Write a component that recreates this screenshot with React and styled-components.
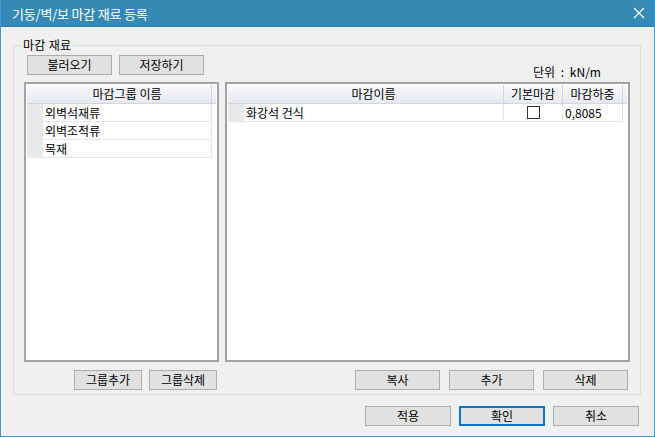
import { createGlobalStyle } from "styled-components";
import styled from "styled-components";

const GlobalStyle = createGlobalStyle`
  html, body {
    margin: 0;
    padding: 0;
    background: #ffffff;
  }
  * {
    box-sizing: border-box;
  }
`;

const font = `"Noto Sans CJK KR", "Noto Sans", sans-serif`;

const leftCols = [
  { key: "rh", width: 16, label: "" },
  { key: "name", width: 169, label: "마감그룹 이름" },
];

const rightCols = [
  { key: "rh", width: 16, label: "" },
  { key: "name", width: 260, label: "마감이름" },
  { key: "base", width: 59, label: "기본마감" },
  { key: "load", width: 60, label: "마감하중" },
];

const groups = ["외벽석재류", "외벽조적류", "목재"];
const materials = [{ name: "화강석 건식", base: false, load: "0,8085" }];

const App = () => {
  return (
    <>
      <GlobalStyle />
      <Window>
        <TitleBar>
          <TitleText>기둥/벽/보 마감 재료 등록</TitleText>
          <CloseIcon width="12" height="12" viewBox="0 0 12 12">
            <path d="M1 1 L11 11 M11 1 L1 11" stroke="#ffffff" strokeWidth="1.2" />
          </CloseIcon>
        </TitleBar>
        <Body>
          <GroupBox>
            <GroupLabel>마감 재료</GroupLabel>
            <TopRow>
              <ButtonRow>
                <Button $w={85}>불러오기</Button>
                <Button $w={85}>저장하기</Button>
              </ButtonRow>
              <UnitLabel>단위 : kN/m</UnitLabel>
            </TopRow>
            <TablesGrid>
              <TableBox>
                <HeaderRow>
                  {leftCols.map((c) => (
                    <HeaderCell key={c.key} $w={c.width} $plain={c.key === "rh"}>
                      {c.label}
                    </HeaderCell>
                  ))}
                </HeaderRow>
                {groups.map((g) => (
                  <DataRow key={g}>
                    <RowHead $w={16} />
                    <Cell $w={169}>{g}</Cell>
                  </DataRow>
                ))}
              </TableBox>
              <TableBox>
                <HeaderRow>
                  {rightCols.map((c) => (
                    <HeaderCell key={c.key} $w={c.width} $plain={c.key === "rh"}>
                      {c.label}
                    </HeaderCell>
                  ))}
                </HeaderRow>
                {materials.map((m) => (
                  <DataRow key={m.name}>
                    <RowHead $w={16} />
                    <Cell $w={260}>{m.name}</Cell>
                    <Cell $w={59} $center>
                      <CheckBox />
                    </Cell>
                    <Cell $w={60}>{m.load}</Cell>
                  </DataRow>
                ))}
              </TableBox>
              <ButtonRow $end $gap={7}>
                <Button $w={68}>그룹추가</Button>
                <Button $w={68}>그룹삭제</Button>
              </ButtonRow>
              <ButtonRow $end $gap={9}>
                <Button $w={85}>복사</Button>
                <Button $w={85}>추가</Button>
                <Button $w={85}>삭제</Button>
              </ButtonRow>
            </TablesGrid>
          </GroupBox>
          <Footer>
            <Button $w={86}>적용</Button>
            <Button $w={86} $default>
              확인
            </Button>
            <Button $w={86}>취소</Button>
          </Footer>
        </Body>
      </Window>
    </>
  );
};

export default App;

const Window = styled.div`
  width: 655px;
  height: 437px;
  display: flex;
  flex-direction: column;
  background: #f0f0f0;
  border: 1px solid #3d9dd2;
  border-top: none;
  font-family: ${font};
  font-size: 12px;
  color: #000;
  overflow: hidden;
`;

const TitleBar = styled.div`
  height: 27px;
  flex: none;
  display: flex;
  align-items: center;
  justify-content: space-between;
  padding: 0 8px 0 11px;
  background: #3589b4;
  border-bottom: 1px solid #2f7ca4;
`;

const TitleText = styled.span`
  color: #ffffff;
  font-size: 13px;
  letter-spacing: -0.2px;
`;

const CloseIcon = styled.svg`
  display: block;
  margin-right: 1px;
`;

const Body = styled.div`
  flex: 1;
  display: flex;
  flex-direction: column;
  padding: 18px 13px 0 12px;
`;

const GroupBox = styled.div`
  position: relative;
  height: 350px;
  border: 1px solid #dcdcdc;
  padding: 9px 10px 0 10px;
`;

const GroupLabel = styled.span`
  position: absolute;
  top: -9px;
  left: 7px;
  padding: 0 2px;
  background: #f0f0f0;
  line-height: 16px;
  letter-spacing: 0.3px;
`;

const TopRow = styled.div`
  display: flex;
  align-items: flex-end;
  justify-content: space-between;
  height: 20px;
  padding: 0 29px 0 3px;
`;

const UnitLabel = styled.span`
  line-height: 16px;
  margin-bottom: -5px;
  word-spacing: 3px;
`;

const ButtonRow = styled.div`
  display: flex;
  gap: ${(p) => p.$gap || 7}px;
  justify-content: ${(p) => (p.$end ? "flex-end" : "flex-start")};
  padding-right: ${(p) => (p.$end ? 2 : 0)}px;
`;

const Button = styled.button`
  width: ${(p) => p.$w}px;
  height: 20px;
  padding: 0;
  margin: 0;
  font-family: ${font};
  font-size: 12px;
  line-height: 16px;
  color: #000;
  background: #e1e1e1;
  border: ${(p) => (p.$default ? "2px solid #0078d7" : "1px solid #adadad")};
`;

const TablesGrid = styled.div`
  display: grid;
  grid-template-columns: 195px 405px;
  grid-template-rows: 280px 20px;
  column-gap: 6px;
  row-gap: 8px;
  margin-top: 7px;
`;

const TableBox = styled.div`
  background: #ffffff;
  border: 2px solid #a3a3a3;
  padding: 1px;
  display: flex;
  flex-direction: column;
  overflow: hidden;
`;

const HeaderRow = styled.div`
  display: flex;
  height: 19px;
  flex: none;
  background: linear-gradient(#f8f9fc, #e6e9f0);
  border-bottom: 1px solid #d2d6de;
`;

const HeaderCell = styled.div`
  width: ${(p) => p.$w}px;
  flex: none;
  text-align: center;
  line-height: 18px;
  border-right: ${(p) => (p.$plain ? "none" : "1px solid #d0d3da")};
`;

const DataRow = styled.div`
  display: flex;
  height: 18px;
  flex: none;
`;

const RowHead = styled.div`
  width: ${(p) => p.$w}px;
  flex: none;
  background: #e8e9eb;
`;

const Cell = styled.div`
  width: ${(p) => p.$w}px;
  flex: none;
  display: flex;
  align-items: center;
  justify-content: ${(p) => (p.$center ? "center" : "flex-start")};
  padding-left: ${(p) => (p.$center ? 0 : 2)}px;
  border-right: 1px solid #e6e6e6;
  border-bottom: 1px solid #e6e6e6;
  white-space: nowrap;
`;

const CheckBox = styled.span`
  display: block;
  width: 13px;
  height: 13px;
  background: #ffffff;
  border: 1px solid #333333;
`;

const Footer = styled.div`
  display: flex;
  justify-content: flex-end;
  gap: 8px;
  margin-top: 11px;
  padding-right: 2px;
`;
